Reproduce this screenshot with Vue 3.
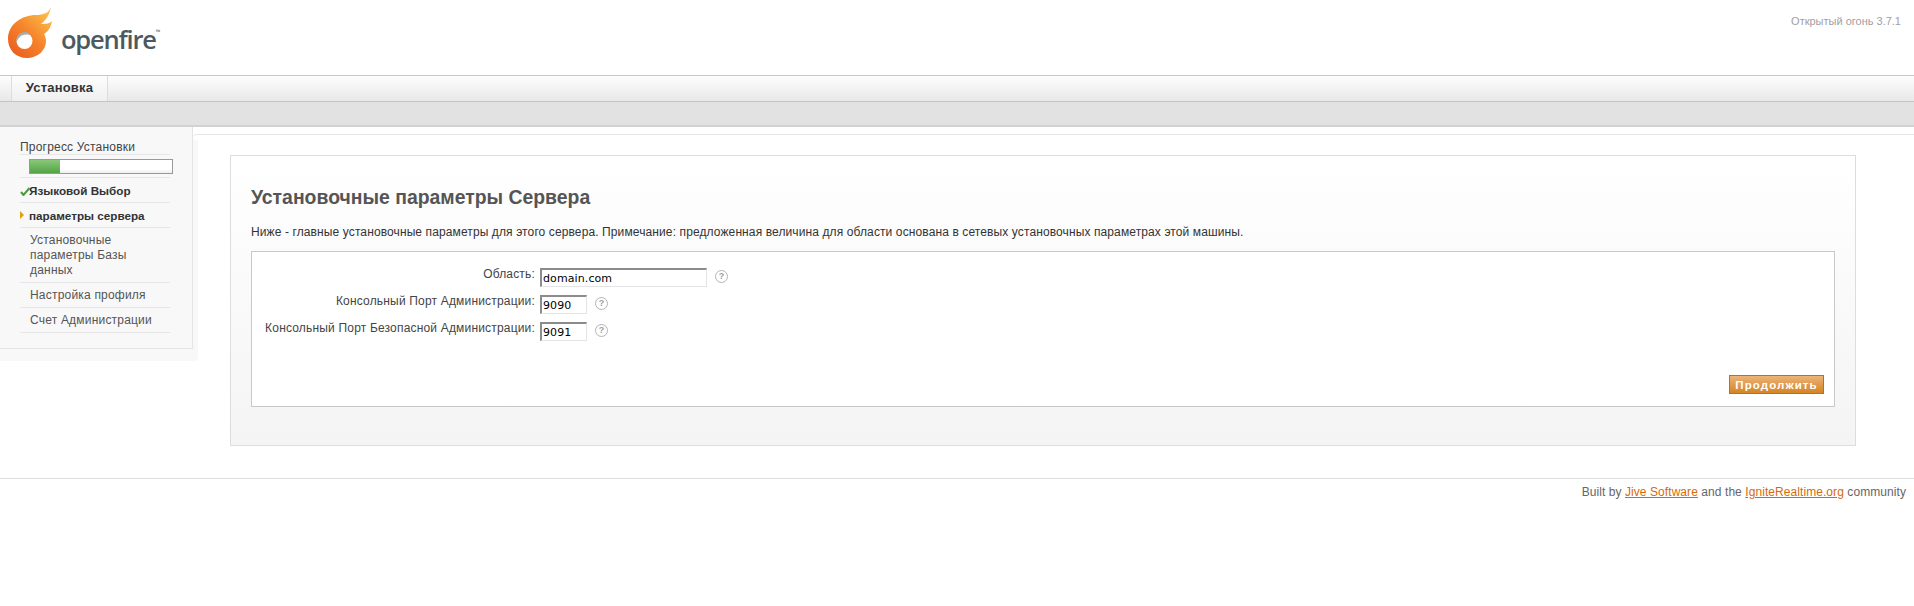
<script setup>
const steps = [
  { label: 'Языковой Выбор', state: 'done' },
  { label: 'параметры сервера', state: 'current' },
  { label: 'Установочные параметры Базы данных', state: '' },
  { label: 'Настройка профиля', state: '' },
  { label: 'Счет Администрации', state: '' },
]

const fields = [
  { label: 'Область:', value: 'domain.com', wide: true },
  { label: 'Консольный Порт Администрации:', value: '9090', wide: false },
  { label: 'Консольный Порт Безопасной Администрации:', value: '9091', wide: false },
]
</script>

<template>
  <div class="page">
    <header class="header">
      <div class="logo">
        <svg class="logo-mark" viewBox="0 0 56 60" width="56" height="60" aria-hidden="true">
          <defs>
            <linearGradient id="flame" x1="0.1" y1="1" x2="0.9" y2="0">
              <stop offset="0" stop-color="#ea5a1e" />
              <stop offset="0.5" stop-color="#f6862c" />
              <stop offset="1" stop-color="#fdc650" />
            </linearGradient>
          </defs>
          <path fill="url(#flame)"
            d="M51 7C49 13 43 15 36 15 22 15 8 24 8 39 8 50 16 58 27 58 38 58 46 50 46 41 46 38 45 36 44 34 48 32 51 27 52 21 49 24 45 24 41 24 46 20 50 14 51 7Z" />
          <circle cx="24.500" cy="41" r="8" fill="#fff" />
          <path fill="#a9abad" d="M25 32C19 32 15.500 37 16.500 43 18 38 21 34.500 26 34.500 28 34.500 30 35 31 35.500 29.500 33 27.500 32 25 32Z" />
        </svg>
        <span class="logo-text">openfire<sup class="tm">™</sup></span>
      </div>
      <div class="version">Открытый огонь 3.7.1</div>
    </header>

    <nav class="tabs">
      <div class="tab">Установка</div>
    </nav>
    <div class="subbar"></div>

    <main class="main">
      <aside class="sidebar">
        <ul class="steps">
          <li class="steps-title">Прогресс Установки</li>
          <li class="steps-progress">
            <div class="progress"><div class="progress-fill" style="width: 21%"></div></div>
          </li>
          <li v-for="step in steps" :key="step.label" class="step" :class="step.state">
            <svg v-if="step.state === 'done'" class="step-check" viewBox="0 0 10 9" width="10" height="9" aria-hidden="true">
              <path d="M1 5 3.500 8 9.500 1" fill="none" stroke="#4c9a3c" stroke-width="2" />
            </svg>
            <span v-if="step.state === 'current'" class="step-arrow"></span>
            {{ step.label }}
          </li>
        </ul>
      </aside>

      <section class="content">
        <div class="panel">
          <h1 class="title">Установочные параметры Сервера</h1>
          <p class="intro">Ниже - главные установочные параметры для этого сервера. Примечание: предложенная величина для области основана в сетевых установочных параметрах этой машины.</p>
          <form class="form" @submit.prevent>
            <div v-for="field in fields" :key="field.label" class="form-row">
              <label class="form-label">{{ field.label }}</label>
              <input class="form-input" :class="{ wide: field.wide }" :value="field.value" />
              <span class="help">?</span>
            </div>
            <div class="form-actions">
              <button class="submit" type="submit">Продолжить</button>
            </div>
          </form>
        </div>
      </section>
    </main>

    <footer class="footer">
      Built by <a href="#">Jive Software</a> and the <a href="#">IgniteRealtime.org</a> community
    </footer>
  </div>
</template>

<style scoped>
.page {
  position: relative;
  z-index: 0;
  font-family: "Liberation Sans", Arial, sans-serif;
  font-size: 12px;
  color: #333;
  width: 1914px;
  height: 606px;
  overflow: hidden;
  background: #fff;
}

.header {
  display: flex;
  justify-content: space-between;
  height: 76px;
  box-sizing: border-box;
  border-bottom: 1px solid #c8c8c8;
}

.logo {
  display: flex;
  align-items: flex-start;
}

.logo-mark {
  flex: none;
}

.logo-text {
  font-family: "Open Sans", sans-serif;
  font-size: 25.500px;
  font-weight: 600;
  color: #4b5a60;
  letter-spacing: -1.2px;
  line-height: 36px;
  margin: 21px 0 0 5px;
}

.tm {
  font-size: 6px;
  line-height: 0;
  vertical-align: 15px;
  letter-spacing: 0;
}

.version {
  color: #a0a0a0;
  font-size: 11px;
  margin: 15px 13px 0 0;
}

.tabs {
  height: 26px;
  box-sizing: border-box;
  padding-left: 11px;
  display: flex;
  background: linear-gradient(#fdfdfd, #e8e8e8);
  border-bottom: 1px solid #c4c4c4;
}

.tab {
  width: 95px;
  border-left: 1px solid #ddd;
  border-right: 1px solid #ddd;
  text-align: center;
  font-size: 13px;
  font-weight: bold;
  letter-spacing: 0.2px;
  line-height: 24px;
  color: #333;
  background: linear-gradient(#fdfdfd, #efefef);
}

.subbar {
  height: 25px;
  box-sizing: border-box;
  background: #e2e2e2;
  border-bottom: 2px solid #d2d2d2;
}

.main {
  display: flex;
  align-items: flex-start;
  height: 351px;
}

.sidebar {
  position: relative;
  width: 192px;
  height: 221px;
  flex: none;
  background: #f8f8f8;
  border-right: 1px solid #e4e4e4;
  border-bottom: 1px solid #e4e4e4;
}

.sidebar::after {
  content: "";
  position: absolute;
  left: 0;
  top: 13px;
  width: 198px;
  height: 221px;
  background: #f8f8f8;
  z-index: -1;
}

.steps {
  list-style: none;
  margin: 0 0 0 20px;
  padding: 0;
  width: 150px;
}

.steps-title {
  height: 28px;
  box-sizing: border-box;
  line-height: 16px;
  padding-top: 12px;
  letter-spacing: 0.2px;
  border-bottom: 1px solid #e6e6e6;
  color: #444;
}

.steps-progress {
  height: 23px;
  box-sizing: border-box;
  padding: 4px 0 0 9px;
  border-bottom: 1px solid #e6e6e6;
}

.progress {
  width: 142px;
  height: 13px;
  border: 1px solid #999;
  background: linear-gradient(#fff 70%, #eee);
}

.progress-fill {
  height: 100%;
  background: linear-gradient(#88c878, #55a347);
}

.step {
  position: relative;
  padding: 5px 10px 4px 10px;
  line-height: 15px;
  letter-spacing: 0.2px;
  border-bottom: 1px solid #e6e6e6;
  color: #555;
}

.step.done,
.step.current {
  font-size: 11.700px;
  font-weight: bold;
  letter-spacing: 0;
  color: #333;
  padding-left: 9px;
}

.step-check {
  position: absolute;
  left: 0;
  top: 9px;
}

.step-arrow {
  position: absolute;
  left: 0;
  top: 8px;
  border-left: 4px solid #e0a010;
  border-top: 4px solid transparent;
  border-bottom: 4px solid transparent;
}

.content {
  flex: 1;
  margin: 7px 0 0 0;
  border-top: 1px solid #e6e6e6;
  border-top-left-radius: 4px;
  padding: 20px 58px 0 37px;
}

.panel {
  height: 291px;
  box-sizing: border-box;
  padding: 0 20px;
  border: 1px solid #ddd;
  background: linear-gradient(#fff, #f4f4f4);
}

.title {
  font-size: 19.400px;
  line-height: 24px;
  color: #555;
  margin: 29px 0 0;
}

.intro {
  font-size: 12px;
  letter-spacing: 0.11px;
  line-height: 14px;
  margin: 16px 0 12px;
  color: #333;
  white-space: nowrap;
}

.form {
  height: 156px;
  box-sizing: border-box;
  position: relative;
  background: #fff;
  border: 1px solid #c8c8c8;
  padding-top: 16px;
}

.form-row {
  display: flex;
  align-items: flex-start;
  height: 27px;
}

.form-label {
  width: 283px;
  flex: none;
  text-align: right;
  font-size: 12px;
  letter-spacing: 0.18px;
  color: #444;
  margin: -1px 5px 0 0;
  line-height: 14px;
}

.form-input {
  width: 47px;
  height: 19px;
  box-sizing: border-box;
  border: 1px solid #e4e4e4;
  border-top: 2px solid #8c8c8c;
  border-left: 2px solid #8c8c8c;
  font-family: "DejaVu Sans", sans-serif;
  font-size: 11px;
  letter-spacing: 0.1px;
  padding: 1px 1px 0;
  color: #000;
  background: #fff;
  outline: none;
}

.form-input.wide {
  width: 167px;
}

.help {
  width: 13px;
  height: 13px;
  box-sizing: border-box;
  margin: 2px 0 0 8px;
  border: 1px solid #b4b4b4;
  border-radius: 50%;
  color: #a0a0a0;
  font-size: 9px;
  font-weight: bold;
  line-height: 11px;
  text-align: center;
}

.form-actions {
  position: absolute;
  right: 10px;
  bottom: 12px;
}

.submit {
  display: block;
  width: 95px;
  height: 19px;
  padding: 0;
  border: 1px solid #7d7d7d;
  background: linear-gradient(#ecb37a, #d58422);
  color: #fff;
  font-family: "Liberation Sans", Arial, sans-serif;
  font-size: 11.500px;
  font-weight: bold;
  letter-spacing: 1.1px;
}

.footer {
  border-top: 1px solid #ddd;
  padding: 6px 8px 0 0;
  text-align: right;
  font-size: 12px;
  letter-spacing: 0.07px;
  line-height: 14px;
  color: #666;
}

.footer a {
  color: #d76a08;
}
</style>

<style>
html,
body {
  margin: 0;
  background: #fff;
}
</style>
